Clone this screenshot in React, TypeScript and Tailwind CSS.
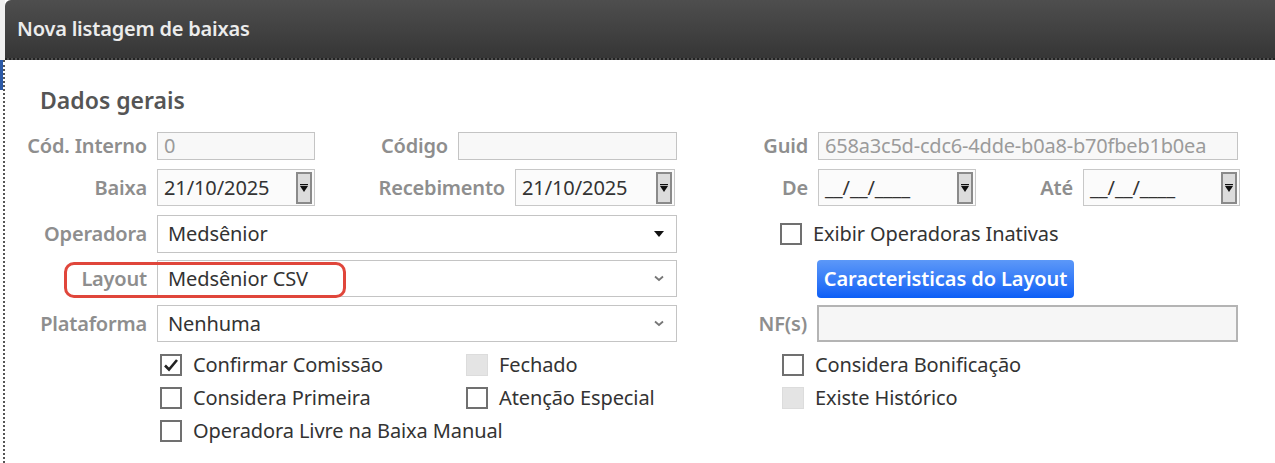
import React from "react";

const font = { fontFamily: '"Noto Sans", "Open Sans", Arial, sans-serif' };

function Label({ text, w }: { text: string; w: number }) {
  return (
    <div
      className="shrink-0 text-right pr-[10px] text-[20px] font-semibold text-[#8e8e8e] leading-none tracking-[-0.2px]"
      style={{ width: w }}
    >
      {text}
    </div>
  );
}

function TextBox({ w, value, muted, nf }: { w: number; value?: string; muted?: boolean; nf?: boolean }) {
  return (
    <div
      className={
        "shrink-0 h-full flex items-center px-[6px] text-[20px] leading-none tracking-[-0.2px] " +
        (nf
          ? "border-2 border-[#b4b4b4] bg-[#f6f6f6]"
          : "border border-[#c4c4c4] bg-[#f8f8f8]") +
        (muted ? " text-[#9b9b9b]" : " text-[#333]")
      }
      style={{ width: w }}
    >
      {value}
    </div>
  );
}

function DateBox({ w, value }: { w: number; value: string }) {
  return (
    <div
      className="shrink-0 h-full flex items-center justify-between pl-[6px] pr-[2px] border border-[#c8c8c8] bg-[#fbfbfb] text-[20px] text-[#333] leading-none tracking-[-0.1px]"
      style={{ width: w }}
    >
      <span>{value}</span>
      <div className="w-[16px] h-[32px] bg-[#dcdcdc] border-2 border-[#8a8a8a] flex items-center justify-center">
        <svg width="8" height="8" viewBox="0 0 8 8">
          <rect x="0" y="0" width="8" height="1.2" fill="#111" />
          <path d="M0 2 L8 2 L4 8 Z" fill="#111" />
        </svg>
      </div>
    </div>
  );
}

function SelectBox({ value, chevron }: { value: string; chevron?: boolean }) {
  return (
    <div className="shrink-0 w-[520px] h-full flex items-center justify-between pl-[10px] pr-[12px] border border-[#c4c4c4] bg-white text-[20px] text-[#333] leading-none tracking-[-0.1px]">
      <span>{value}</span>
      {chevron ? (
        <svg width="10" height="7" viewBox="0 0 10 7">
          <path d="M1 1.5 L5 5 L9 1.5" stroke="#777" strokeWidth="1.8" fill="none" />
        </svg>
      ) : (
        <svg width="10" height="6" viewBox="0 0 10 6">
          <path d="M0 0 L10 0 L5 6 Z" fill="#111" />
        </svg>
      )}
    </div>
  );
}

function Check({ text, checked, disabled }: { text: string; checked?: boolean; disabled?: boolean }) {
  return (
    <div className="flex items-center gap-[11px] text-[20px] text-[#333] leading-none tracking-[-0.1px]">
      <div
        className={
          "w-[22px] h-[22px] shrink-0 flex items-center justify-center " +
          (disabled ? "bg-[#e4e4e4] border border-[#dcdcdc]" : "bg-white border-2 border-[#707070]")
        }
      >
        {checked && (
          <svg width="16" height="14" viewBox="0 0 16 14">
            <path d="M2 7.5 L6 11.5 L14 2" stroke="#222" strokeWidth="2.6" fill="none" />
          </svg>
        )}
      </div>
      <span className="whitespace-nowrap">{text}</span>
    </div>
  );
}

export default function App() {
  return (
    <div className="w-[1275px] h-[463px] bg-white overflow-hidden relative" style={font}>
      <div className="flex h-full">
        <div className="w-[5px] shrink-0 flex flex-col">
          <div className="h-[60px] bg-[#f0f0f0]" />
          <div className="flex-1 flex">
            <div className="w-[3px] h-[30px] bg-[#2c5aa8]" />
            <div className="w-[2px] border-l-2 border-dotted border-[#555]" />
          </div>
        </div>
        <div className="flex-1 flex flex-col">
          <div className="h-[60px] shrink-0 rounded-tl-[6px] bg-gradient-to-b from-[#4e4e4e] to-[#363636] border-b-2 border-dotted border-[#222] flex items-center pl-[12px]">
            <span className="text-[20px] font-semibold text-[#ececec] tracking-[-0.2px]">Nova listagem de baixas</span>
          </div>

          <div className="flex-1 flex flex-col -ml-[5px]">
            <div className="pl-[40px] pt-[29px] h-[72px] text-[23px] font-semibold text-[#555] leading-none">
              Dados gerais
            </div>

            <div className="flex items-center h-[28px]">
              <Label text="Cód. Interno" w={157} />
              <TextBox w={158} value="0" muted />
              <Label text="Código" w={143} />
              <TextBox w={219} />
              <Label text="Guid" w={141} />
              <TextBox w={420} value="658a3c5d-cdc6-4dde-b0a8-b70fbeb1b0ea" muted />
            </div>

            <div className="flex items-center h-[37px] mt-[9px]">
              <Label text="Baixa" w={157} />
              <DateBox w={158} value="21/10/2025" />
              <Label text="Recebimento" w={200} />
              <DateBox w={160} value="21/10/2025" />
              <Label text="De" w={143} />
              <DateBox w={158} value="__/__/____" />
              <Label text="Até" w={107} />
              <DateBox w={157} value="__/__/____" />
            </div>

            <div className="flex items-center h-[38px] mt-[9px]">
              <Label text="Operadora" w={157} />
              <SelectBox value="Medsênior" />
              <div className="ml-[103px]">
                <Check text="Exibir Operadoras Inativas" />
              </div>
            </div>

            <div className="flex items-center h-[37px] mt-[7px]">
              <Label text="Layout" w={157} />
              <SelectBox value="Medsênior CSV" chevron />
              <div className="ml-[140px] w-[257px] h-[38px] rounded-[4px] bg-gradient-to-b from-[#5c98f8] to-[#0a5ef6] flex items-center justify-center text-[20px] font-semibold text-white leading-none tracking-[-0.1px]">
                Caracteristicas do Layout
              </div>
            </div>

            <div className="flex items-center h-[37px] mt-[8px]">
              <Label text="Plataforma" w={157} />
              <SelectBox value="Nenhuma" chevron />
              <Label text="NF(s)" w={140} />
              <TextBox w={421} nf />
            </div>

            <div className="flex mt-[12px]">
              <div className="w-[160px] shrink-0" />
              <div className="flex flex-col gap-[11px] w-[306px] shrink-0">
                <Check text="Confirmar Comissão" checked />
                <Check text="Considera Primeira" />
                <Check text="Operadora Livre na Baixa Manual" />
              </div>
              <div className="flex flex-col gap-[11px] w-[316px] shrink-0">
                <Check text="Fechado" disabled />
                <Check text="Atenção Especial" />
              </div>
              <div className="flex flex-col gap-[11px]">
                <Check text="Considera Bonificação" />
                <Check text="Existe Histórico" disabled />
              </div>
            </div>
          </div>
        </div>
      </div>

      <div className="absolute left-[64px] top-[262px] w-[282px] h-[36px] border-[3px] border-[#e0463b] rounded-[10px]" />
    </div>
  );
}
